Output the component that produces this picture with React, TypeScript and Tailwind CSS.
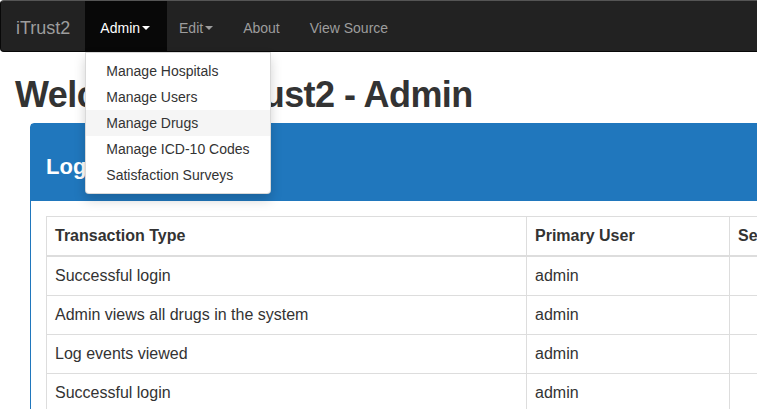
import React from 'react';

const menuItems = [
  'Manage Hospitals',
  'Manage Users',
  'Manage Drugs',
  'Manage ICD-10 Codes',
  'Satisfaction Surveys',
];

const rows = [
  { type: 'Successful login', user: 'admin' },
  { type: 'Admin views all drugs in the system', user: 'admin' },
  { type: 'Log events viewed', user: 'admin' },
  { type: 'Successful login', user: 'admin' },
  { type: 'Successful login', user: 'admin' },
];

function Caret() {
  return (
    <span className="ml-[2px] inline-block h-0 w-0 border-x-4 border-t-4 border-x-transparent border-t-current align-middle" />
  );
}

export default function App() {
  return (
    <div className="h-screen w-screen overflow-hidden bg-white font-['Liberation_Sans',Arial,sans-serif] text-[14px] text-[#333]">
      <nav className="relative z-20 flex h-[52px] w-[820px] items-stretch rounded-[4px] border border-[#080808] border-t-[#555] bg-[#222]">
        <span className="px-[15px] pb-[13px] pt-[17px] text-[18px] leading-[20px] text-[#9d9d9d]">iTrust2</span>
        <div className="relative">
          <span className="flex h-full items-center bg-[#080808] pl-[15px] pr-[17px] pt-[4px] leading-[20px] text-white">
            Admin
            <Caret />
          </span>
          <ul className="absolute left-0 top-[51px] whitespace-nowrap rounded-b-[4px] border border-[rgba(0,0,0,0.15)] bg-white py-[5px] shadow-[0_6px_12px_rgba(0,0,0,0.175)]">
            {menuItems.map((item) => (
              <li
                key={item}
                className={`px-[20px] py-[3px] leading-[20px] text-[#333] ${item === 'Manage Drugs' ? 'bg-[#f5f5f5]' : ''}`}
              >
                {item}
              </li>
            ))}
          </ul>
        </div>
        <span className="flex items-center pl-[12px] pr-[15px] pt-[4px] leading-[20px] text-[#9d9d9d]">
          Edit
          <Caret />
        </span>
        <span className="flex items-center pl-[15px] pr-[15px] pt-[4px] leading-[20px] text-[#9d9d9d]">About</span>
        <span className="flex items-center px-[15px] pt-[4px] leading-[20px] text-[#9d9d9d]">View Source</span>
      </nav>

      <div className="px-[15px]">
        <h1 className="mt-[23px] text-[36px] font-bold leading-[1.1] tracking-[-0.55px] text-[#333]">
          Welcome to iTrust2 - Admin
        </h1>

        <div className="ml-[15px] mt-[8px] w-[900px] rounded-t-[4px] border border-[#2077bd]">
          <div className="h-[77px] bg-[#2077bd] px-[15px] pt-[31px]">
            <h3 className="text-[22px] font-bold leading-[24px] text-white">Log Entries</h3>
          </div>
          <div className="p-[15px]">
            <table className="w-[860px] table-fixed border-collapse border border-[#ddd] text-[16px] leading-[22px]">
              <colgroup>
                <col className="w-[480px]" />
                <col className="w-[203px]" />
                <col />
              </colgroup>
              <thead>
                <tr>
                  <th className="border border-b-2 border-[#ddd] p-[8px] text-left font-bold">Transaction Type</th>
                  <th className="border border-b-2 border-[#ddd] p-[8px] text-left font-bold">Primary User</th>
                  <th className="border border-b-2 border-[#ddd] p-[8px] text-left font-bold">Secondary User</th>
                </tr>
              </thead>
              <tbody>
                {rows.map((row, i) => (
                  <tr key={i}>
                    <td className="border border-[#ddd] p-[8px]">{row.type}</td>
                    <td className="border border-[#ddd] p-[8px]">{row.user}</td>
                    <td className="border border-[#ddd] p-[8px]"></td>
                  </tr>
                ))}
              </tbody>
            </table>
          </div>
        </div>
      </div>
    </div>
  );
}
